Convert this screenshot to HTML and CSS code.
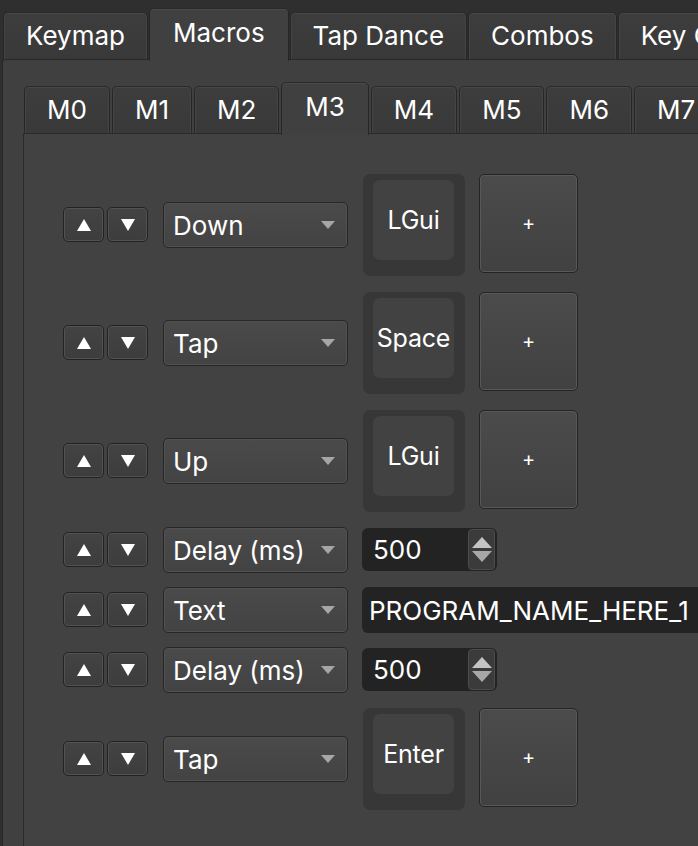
FILE: index.html
```html
<!DOCTYPE html>
<html>
<head>
<meta charset="utf-8">
<link rel="stylesheet" href="styles.css">
</head>
<body>
<div class="window">
  <div class="tabbar">
    <div class="tab">Keymap</div>
    <div class="tab active">Macros</div>
    <div class="tab">Tap Dance</div>
    <div class="tab">Combos</div>
    <div class="tab">Key Override</div>
  </div>
  <div class="pane">
    <div class="tabbar sub">
      <div class="tab">M0</div>
      <div class="tab">M1</div>
      <div class="tab">M2</div>
      <div class="tab active">M3</div>
      <div class="tab">M4</div>
      <div class="tab">M5</div>
      <div class="tab">M6</div>
      <div class="tab">M7</div>
      <div class="tab">M8</div>
    </div>
    <div class="subpane">
      <div class="rows">

        <div class="row tall">
          <div class="arrows">
            <button class="arrow"><svg width="14" height="12" viewBox="0 0 14 12"><polygon points="7,0 14,12 0,12" fill="#fff"/></svg></button>
            <button class="arrow"><svg width="14" height="12" viewBox="0 0 14 12"><polygon points="0,0 14,0 7,12" fill="#fff"/></svg></button>
          </div>
          <div class="combo"><span>Down</span><svg class="caret" width="14" height="8" viewBox="0 0 14 8"><polygon points="0,0 14,0 7,8" fill="#a6a6a6"/></svg></div>
          <div class="key"><div class="cap">LGui</div></div>
          <button class="add">+</button>
        </div>

        <div class="row tall">
          <div class="arrows">
            <button class="arrow"><svg width="14" height="12" viewBox="0 0 14 12"><polygon points="7,0 14,12 0,12" fill="#fff"/></svg></button>
            <button class="arrow"><svg width="14" height="12" viewBox="0 0 14 12"><polygon points="0,0 14,0 7,12" fill="#fff"/></svg></button>
          </div>
          <div class="combo"><span>Tap</span><svg class="caret" width="14" height="8" viewBox="0 0 14 8"><polygon points="0,0 14,0 7,8" fill="#a6a6a6"/></svg></div>
          <div class="key"><div class="cap">Space</div></div>
          <button class="add">+</button>
        </div>

        <div class="row tall">
          <div class="arrows">
            <button class="arrow"><svg width="14" height="12" viewBox="0 0 14 12"><polygon points="7,0 14,12 0,12" fill="#fff"/></svg></button>
            <button class="arrow"><svg width="14" height="12" viewBox="0 0 14 12"><polygon points="0,0 14,0 7,12" fill="#fff"/></svg></button>
          </div>
          <div class="combo"><span>Up</span><svg class="caret" width="14" height="8" viewBox="0 0 14 8"><polygon points="0,0 14,0 7,8" fill="#a6a6a6"/></svg></div>
          <div class="key"><div class="cap">LGui</div></div>
          <button class="add">+</button>
        </div>

        <div class="row">
          <div class="arrows">
            <button class="arrow"><svg width="14" height="12" viewBox="0 0 14 12"><polygon points="7,0 14,12 0,12" fill="#fff"/></svg></button>
            <button class="arrow"><svg width="14" height="12" viewBox="0 0 14 12"><polygon points="0,0 14,0 7,12" fill="#fff"/></svg></button>
          </div>
          <div class="combo"><span>Delay (ms)</span><svg class="caret" width="14" height="8" viewBox="0 0 14 8"><polygon points="0,0 14,0 7,8" fill="#a6a6a6"/></svg></div>
          <div class="spin">
            <span class="value">500</span>
            <div class="spin-btns">
              <svg width="20" height="11" viewBox="0 0 20 11"><polygon points="10,0 20,11 0,11" fill="#c4c4c4"/></svg>
              <svg width="20" height="11" viewBox="0 0 20 11"><polygon points="0,0 20,0 10,11" fill="#a8a8a8"/></svg>
            </div>
          </div>
        </div>

        <div class="row">
          <div class="arrows">
            <button class="arrow"><svg width="14" height="12" viewBox="0 0 14 12"><polygon points="7,0 14,12 0,12" fill="#fff"/></svg></button>
            <button class="arrow"><svg width="14" height="12" viewBox="0 0 14 12"><polygon points="0,0 14,0 7,12" fill="#fff"/></svg></button>
          </div>
          <div class="combo"><span>Text</span><svg class="caret" width="14" height="8" viewBox="0 0 14 8"><polygon points="0,0 14,0 7,8" fill="#a6a6a6"/></svg></div>
          <div class="line-edit">PROGRAM_NAME_HERE_1</div>
        </div>

        <div class="row">
          <div class="arrows">
            <button class="arrow"><svg width="14" height="12" viewBox="0 0 14 12"><polygon points="7,0 14,12 0,12" fill="#fff"/></svg></button>
            <button class="arrow"><svg width="14" height="12" viewBox="0 0 14 12"><polygon points="0,0 14,0 7,12" fill="#fff"/></svg></button>
          </div>
          <div class="combo"><span>Delay (ms)</span><svg class="caret" width="14" height="8" viewBox="0 0 14 8"><polygon points="0,0 14,0 7,8" fill="#a6a6a6"/></svg></div>
          <div class="spin">
            <span class="value">500</span>
            <div class="spin-btns">
              <svg width="20" height="11" viewBox="0 0 20 11"><polygon points="10,0 20,11 0,11" fill="#c4c4c4"/></svg>
              <svg width="20" height="11" viewBox="0 0 20 11"><polygon points="0,0 20,0 10,11" fill="#a8a8a8"/></svg>
            </div>
          </div>
        </div>

        <div class="row tall">
          <div class="arrows">
            <button class="arrow"><svg width="14" height="12" viewBox="0 0 14 12"><polygon points="7,0 14,12 0,12" fill="#fff"/></svg></button>
            <button class="arrow"><svg width="14" height="12" viewBox="0 0 14 12"><polygon points="0,0 14,0 7,12" fill="#fff"/></svg></button>
          </div>
          <div class="combo"><span>Tap</span><svg class="caret" width="14" height="8" viewBox="0 0 14 8"><polygon points="0,0 14,0 7,8" fill="#a6a6a6"/></svg></div>
          <div class="key"><div class="cap">Enter</div></div>
          <button class="add">+</button>
        </div>

      </div>
    </div>
  </div>
</div>
</body>
</html>
```
FILE: styles.css
```css
html, body {
  margin: 0;
  padding: 0;
  width: 698px;
  height: 846px;
  overflow: hidden;
  background: #2f2f2f;
  font-family: Inter, "Liberation Sans", sans-serif;
  color: #ffffff;
}

.window {
  width: 698px;
  height: 846px;
  overflow: hidden;
}

.tabbar {
  display: flex;
  align-items: flex-end;
  gap: 1px;
  padding: 8px 0 0 3px;
  height: 59px;
  box-sizing: border-box;
  white-space: nowrap;
  position: relative;
  z-index: 2;
}

.tab {
  flex: none;
  height: 47px;
  box-sizing: border-box;
  padding: 0 22px 2px;
  display: flex;
  align-items: center;
  justify-content: center;
  font-size: 26px;
  background: linear-gradient(#3d3d3d, #393939);
  border: 1px solid #262626;
  border-bottom: none;
  border-top-color: #2a2a2a;
  border-radius: 5px 5px 0 0;
  box-shadow: inset 0 1px 0 #474747, inset 1px 0 0 #444444, inset -1px 0 0 #444444;
}

.tab.active {
  height: 53px;
  background: #404040;
  box-shadow: inset 0 1px 0 #4a4a4a;
  margin-bottom: -2px;
  padding-left: 23px;
  padding-right: 23px;
  padding-bottom: 6px;
}

.pane {
  margin-left: 2px;
  background: #404040;
  border: 1px solid #282828;
  border-right: none;
  border-radius: 4px 0 0 0;
  padding: 0 0 0 20px;
  height: 900px;
  box-sizing: border-box;
  position: relative;
  z-index: 1;
}

.tabbar.sub {
  padding: 21px 0 0 1px;
  height: 73px;
  gap: 2px;
}

.sub .tab {
  padding-left: 22px;
  padding-right: 22px;
}

.sub .tab.active {
  padding-left: 23px;
  padding-right: 23px;
}

.subpane {
  background: #424242;
  border: 1px solid #2a2a2a;
  border-right: none;
  height: 800px;
  padding: 39px 0 0 39px;
  box-sizing: border-box;
}

.rows {
  display: flex;
  flex-direction: column;
  gap: 15px;
}

.row {
  display: flex;
  align-items: center;
  height: 45px;
}

.row.tall {
  height: 103px;
}

.arrows {
  display: flex;
  flex: none;
  gap: 3px;
  margin-right: 15px;
}

button {
  font: inherit;
  color: inherit;
  padding: 0;
  margin: 0;
}

.arrow {
  width: 41px;
  height: 35px;
  box-sizing: border-box;
  display: flex;
  align-items: center;
  justify-content: center;
  background: linear-gradient(#434343, #3d3d3d);
  border: 1px solid #222222;
  border-radius: 5px;
  box-shadow: inset 0 0 0 1px #525252;
}

.combo {
  flex: none;
  width: 185px;
  height: 46px;
  box-sizing: border-box;
  display: flex;
  align-items: center;
  justify-content: space-between;
  padding: 0 12px 0 9px;
  font-size: 26px;
  background: linear-gradient(#4a4a4a, #434343);
  border: 1px solid #262626;
  border-radius: 5px;
  box-shadow: inset 0 0 0 1px #515151;
  margin-right: 14px;
}

.combo span {
  padding-top: 2px;
}

.caret {
  flex: none;
}

.key {
  flex: none;
  width: 102px;
  height: 102px;
  box-sizing: border-box;
  background: #373737;
  border-radius: 7px;
  padding: 6px 11px 16px 10px;
  margin-right: 14px;
  margin-left: 1px;
}

.cap {
  height: 100%;
  background: #424242;
  border-radius: 7px;
  display: flex;
  align-items: center;
  justify-content: center;
  font-size: 25px;
  letter-spacing: -0.2px;
}

.add {
  flex: none;
  width: 99px;
  height: 99px;
  box-sizing: border-box;
  background: linear-gradient(#4b4b4b, #414141);
  border: 1px solid #242424;
  border-radius: 5px;
  box-shadow: inset 0 0 0 1px #585858;
  font-size: 20px;
  display: flex;
  align-items: center;
  justify-content: center;
  margin-top: -3px;
}

.spin {
  flex: none;
  width: 135px;
  height: 43px;
  box-sizing: border-box;
  background: #232323;
  border-radius: 6px;
  display: flex;
  align-items: stretch;
  justify-content: space-between;
  padding: 1px 2px 1px 0;
}

.spin .value {
  font-size: 26px;
  padding-left: 11px;
  display: flex;
  align-items: center;
}

.spin-btns {
  width: 27px;
  box-sizing: border-box;
  background: #3b3b3b;
  border: 1px solid #4c4c4c;
  border-radius: 4px;
  display: flex;
  flex-direction: column;
  align-items: center;
  justify-content: center;
  gap: 3px;
}

.line-edit {
  width: 420px;
  height: 46px;
  flex: none;
  box-sizing: border-box;
  background: #232323;
  border-radius: 6px;
  font-size: 26px;
  padding: 2px 0 0 7px;
  display: flex;
  align-items: center;
  white-space: nowrap;
}
```
